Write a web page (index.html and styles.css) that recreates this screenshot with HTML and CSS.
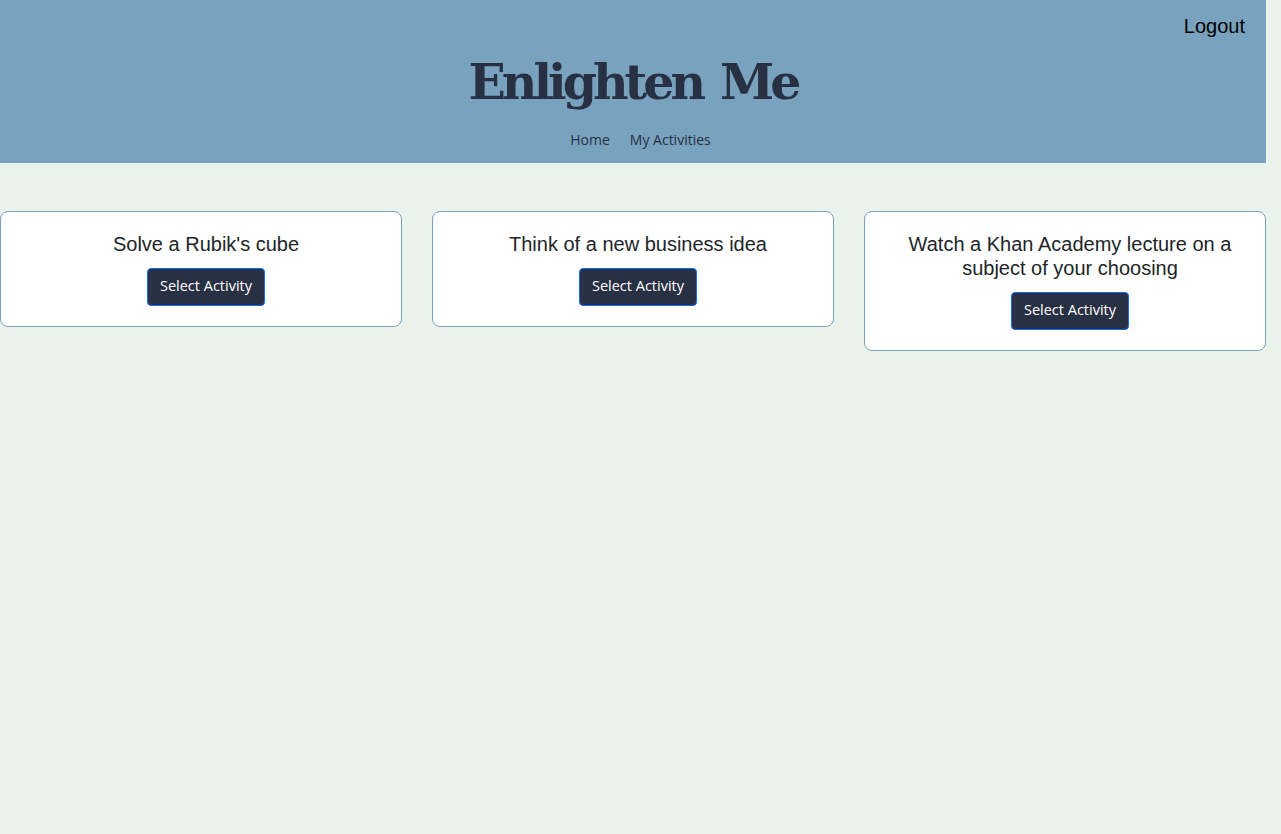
FILE: index.html
```html
<!DOCTYPE html>
<html lang="en">
<head>
<meta charset="utf-8">
<title>Enlighten Me</title>
<link rel="stylesheet" href="styles.css">
</head>
<body>
<div class="page">
  <header class="header">
    <div class="logout-row"><a class="logout" href="#">Logout</a></div>
    <h1 class="title">Enlighten Me</h1>
    <nav class="nav">
      <a href="#">Home</a>
      <a href="#">My Activities</a>
    </nav>
  </header>
  <main class="cards">
    <div class="card">
      <h2 class="card-title">Solve a Rubik's cube</h2>
      <button class="btn">Select Activity</button>
    </div>
    <div class="card">
      <h2 class="card-title">Think of a new business idea</h2>
      <button class="btn">Select Activity</button>
    </div>
    <div class="card">
      <h2 class="card-title">Watch a Khan Academy lecture on a subject of your choosing</h2>
      <button class="btn">Select Activity</button>
    </div>
  </main>
</div>
</body>
</html>
```
FILE: styles.css
```css
html, body {
  margin: 0;
  padding: 0;
  background: #e9f3ec;
  min-height: 100%;
}
body {
  font-family: "Liberation Sans", Arial, sans-serif;
}
.page {
  width: 1266px;
}
.header {
  background: #78a2bd;
  height: 163px;
  box-sizing: border-box;
  display: flex;
  flex-direction: column;
  align-items: center;
}
.logout-row {
  align-self: stretch;
  display: flex;
  justify-content: flex-end;
  padding: 13px 21px 0 0;
  height: 28px;
}
.logout {
  color: #000;
  text-decoration: none;
  font-size: 20px;
  line-height: 26px;
}
.title {
  margin: 9px 0 0;
  font-family: "DejaVu Serif", serif;
  font-weight: bold;
  font-size: 49px;
  line-height: 64px;
  color: #283044;
  letter-spacing: -4px;
  word-spacing: 5px;
}
.nav {
  display: flex;
  gap: 20px;
  margin-top: 16px;
  padding-left: 15px;
}
.nav a {
  font-family: "Open Sans", sans-serif;
  font-size: 14px;
  color: #283044;
  text-decoration: none;
  line-height: 20px;
}
.cards {
  display: flex;
  align-items: flex-start;
  gap: 30px;
  margin-top: 48px;
}
.card {
  flex: 0 0 402px;
  box-sizing: border-box;
  background: #fff;
  border: 1px solid #78a2bd;
  border-radius: 8px;
  padding: 20px 15px 20px 25px;
  display: flex;
  flex-direction: column;
  align-items: center;
  text-align: center;
}
.card-title {
  margin: 0 0 12px;
  font-family: "Liberation Sans", Arial, sans-serif;
  font-weight: normal;
  font-size: 20px;
  line-height: 24px;
  color: #212529;
}
.btn {
  height: 38px;
  box-sizing: border-box;
  background: #283044;
  color: #fff;
  border: 1px solid #0d6efd;
  border-radius: 4px;
  padding: 0 12px 3px;
  font-family: "Open Sans", sans-serif;
  font-size: 14.5px;
  font-weight: 500;
  cursor: pointer;
}
```
